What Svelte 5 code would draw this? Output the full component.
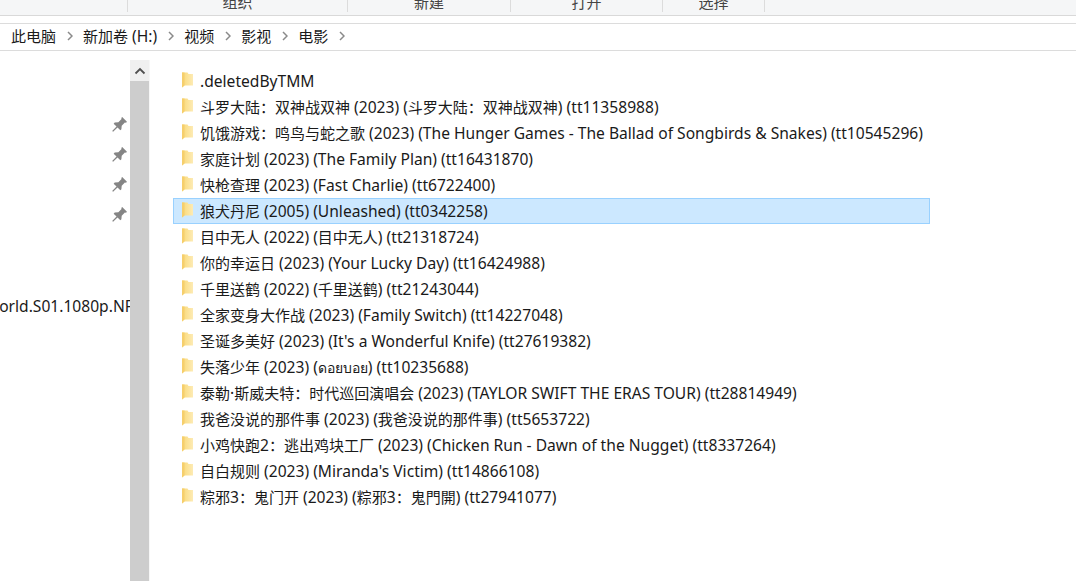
<script>
  const groups = [
    { label: '', w: 128 },
    { label: '组织', w: 220 },
    { label: '新建', w: 163 },
    { label: '打开', w: 152 },
    { label: '选择', w: 102 }
  ];
  const crumbs = ['此电脑', '新加卷 (H:)', '视频', '影视', '电影'];
  const rows = [
    '.deletedByTMM',
    '斗罗大陆：双神战双神 (2023) (斗罗大陆：双神战双神) (tt11358988)',
    '饥饿游戏：鸣鸟与蛇之歌 (2023) (The Hunger Games - The Ballad of Songbirds & Snakes) (tt10545296)',
    '家庭计划 (2023) (The Family Plan) (tt16431870)',
    '快枪查理 (2023) (Fast Charlie) (tt6722400)',
    '狼犬丹尼 (2005) (Unleashed) (tt0342258)',
    '目中无人 (2022) (目中无人) (tt21318724)',
    '你的幸运日 (2023) (Your Lucky Day) (tt16424988)',
    '千里送鹤 (2022) (千里送鹤) (tt21243044)',
    '全家变身大作战 (2023) (Family Switch) (tt14227048)',
    "圣诞多美好 (2023) (It's a Wonderful Knife) (tt27619382)",
    '失落少年 (2023) (ดอยบอย) (tt10235688)',
    '泰勒·斯威夫特：时代巡回演唱会 (2023) (TAYLOR SWIFT THE ERAS TOUR) (tt28814949)',
    '我爸没说的那件事 (2023) (我爸没说的那件事) (tt5653722)',
    '小鸡快跑2：逃出鸡块工厂 (2023) (Chicken Run - Dawn of the Nugget) (tt8337264)',
    "自白规则 (2023) (Miranda's Victim) (tt14866108)",
    '粽邪3：鬼门开 (2023) (粽邪3：鬼門開) (tt27941077)'
  ];
  // Latin, CJK and Thai runs take slightly different sizes, as in the reference's font pairing.
  const split = (s) =>
    s.split(/([\u3000-\u9fff\uff00-\uffef]+|[\u0e00-\u0e7f]+)/).filter(Boolean).map((t) => ({
      t,
      cjk: /[\u3000-\u9fff\uff00-\uffef]/.test(t),
      thai: /[\u0e00-\u0e7f]/.test(t)
    }));
</script>

<div class="window">
  <div class="ribbon">
    {#each groups as g}
      <div class="group" style="width:{g.w}px"><span>{g.label}</span></div>
    {/each}
  </div>

  <div class="address">
    {#each crumbs as c}
      <span class="crumb">{#each split(c) as s}<span class:cjk={s.cjk}>{s.t}</span>{/each}</span>
      <svg class="chev" width="6" height="10" viewBox="0 0 6 10"><path d="M1 1l4 4-4 4" fill="none" stroke="#8a8a8a" stroke-width="1.5"/></svg>
    {/each}
  </div>

  <div class="body">
    <div class="nav">
      {#each [0, 1, 2, 3] as p}
        <div class="pin">
          <svg width="18" height="18" viewBox="0 0 16 16">
            <g transform="rotate(45 8 8)">
              <path d="M5 1h6v1.400h-.9v4.300l2.100 2.500v1.300H8.600v5.500H7.400v-5.500H3.800V9.200l2.100-2.500V2.400H5z" fill="#858585"/>
            </g>
          </svg>
        </div>
      {/each}
      <div class="navtext">World.S01.1080p.NF</div>
    </div>

    <div class="scroll">
      <div class="up">
        <svg width="12" height="8" viewBox="0 0 12 8"><path d="M1.500 6.500L6 2l4.500 4.500" fill="none" stroke="#505050" stroke-width="1.800"/></svg>
      </div>
      <div class="thumb"></div>
    </div>

    <div class="list">
      {#each rows as r, i}
        <div class="row" class:selected={i === 5}>
          <svg class="folder" width="13" height="17" viewBox="0 0 13 17">
            <defs>
              <linearGradient id="f{i}" x1="0" x2="1" y1="0" y2="0">
                <stop offset="0" stop-color="#f8d576"/>
                <stop offset="0.4" stop-color="#fbe08f"/>
                <stop offset="1" stop-color="#fdebb5"/>
              </linearGradient>
            </defs>
            <path d="M1 1.500h5.500l1 1.500H12v11.500H3.500L1 16.500z" fill="url(#f{i})"/>
            <path d="M1 1.500h2.500v13L1 16.500z" fill="#f6cf6c"/>
          </svg>
          <span class="name">{#each split(r) as s}<span class:cjk={s.cjk} class:thai={s.thai}>{s.t}</span>{/each}</span>
        </div>
      {/each}
    </div>
  </div>
</div>

<style>
  :global(body) {
    margin: 0;
    background: #fff;
  }
  .window {
    width: 1076px;
    height: 581px;
    overflow: hidden;
    display: flex;
    flex-direction: column;
    font-family: "Noto Sans", "Noto Sans CJK SC", sans-serif;
    font-size: 15.600px;
    color: #1a1a1a;
  }
  .cjk {
    font-size: 15px;
    font-family: "Noto Sans CJK SC", sans-serif;
  }
  .thai {
    font-size: 14px;
  }
  .ribbon {
    flex: none;
    height: 15px;
    display: flex;
    align-items: flex-start;
    background: #f5f6f7;
    border-bottom: 1px solid #d9d9d9;
    font-size: 15px;
  }
  .group {
    height: 12px;
    overflow: hidden;
    box-sizing: border-box;
    border-right: 1px solid #dcdcdc;
    text-align: center;
    color: #444;
  }
  .group span {
    display: block;
    line-height: 20px;
    margin-top: -8px;
  }
  .address {
    flex: none;
    margin-top: 7px;
    height: 28px;
    box-sizing: border-box;
    display: flex;
    align-items: center;
    gap: 10.500px;
    padding: 0 0 2px 11px;
    border-top: 1px solid #dcdcdc;
    border-bottom: 1px solid #dcdcdc;
  }
  .crumb {
    white-space: nowrap;
    line-height: 20px;
  }
  .body {
    flex: 1;
    min-height: 0;
    display: flex;
    padding-top: 9px;
  }
  .nav {
    flex: none;
    width: 130px;
    overflow: hidden;
    padding-top: 50px;
    box-sizing: border-box;
  }
  .pin {
    height: 30px;
    display: flex;
    align-items: center;
    justify-content: flex-end;
    padding-right: 2px;
  }
  .navtext {
    margin: 65px 0 0 -15px;
    white-space: nowrap;
    line-height: 22px;
  }
  .scroll {
    flex: none;
    width: 19px;
    display: flex;
    flex-direction: column;
    background: #f0f0f0;
  }
  .up {
    flex: none;
    height: 21px;
    display: flex;
    align-items: center;
    justify-content: center;
  }
  .thumb {
    flex: 1;
    background: #cdcdcd;
  }
  .list {
    flex: 1;
    padding: 8px 0 0 23px;
    border-left: 1px solid #f7f7f7;
  }
  .row {
    width: 757px;
    height: 26px;
    box-sizing: border-box;
    display: flex;
    align-items: center;
    gap: 6px;
    padding-left: 8px;
    white-space: nowrap;
  }
  .row.selected {
    background: #cce8ff;
    border: 1px solid #99d1ff;
    padding-left: 7px;
  }
  .folder {
    flex: none;
    margin-top: -3px;
  }
  .name {
    line-height: 20px;
  }
</style>
